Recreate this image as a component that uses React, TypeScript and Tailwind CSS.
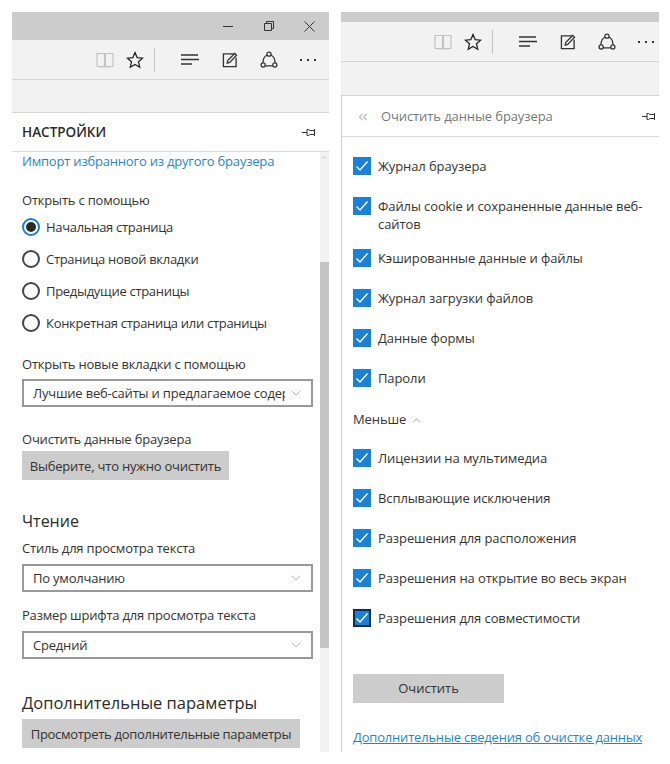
import { ChevronDown, ChevronUp, ChevronsLeft } from "lucide-react"

const font = "font-['Open_Sans',sans-serif]"

function Toolbar({ right = "mr-[13px]" }: { right?: string }) {
  return (
    <div className="flex h-full items-center justify-end text-[#2b2b2b]">
      {/* reading view */}
      <svg width="18" height="16" viewBox="0 0 18 16" fill="none" stroke="#c4c4c4" strokeWidth="1.2">
        <path d="M1 1.500h7.500v13H1zM9.500 1.500H17v13H9.500z" />
        <path d="M3 14.800h12" />
      </svg>
      {/* favourite */}
      <svg className="ml-[12px]" width="18" height="18" viewBox="0 0 18 18" fill="none" stroke="#222" strokeWidth="1.3">
        <path d="M9 1.600l2.200 5.100 5.400.5-4.100 3.600 1.200 5.400L9 13.400l-4.700 2.800 1.200-5.400-4.100-3.600 5.400-.5z" />
      </svg>
      <div className="ml-[10px] h-[24px] w-px bg-[#c4c4c4]" />
      {/* hub */}
      <svg className="ml-[26px]" width="18" height="12" viewBox="0 0 18 12" fill="none" stroke="#333" strokeWidth="1.3">
        <path d="M0 1h17M0 5.500h18M0 10h11" />
      </svg>
      {/* note */}
      <svg className="ml-[23px]" width="16" height="16" viewBox="0 0 17 17" fill="none" stroke="#333" strokeWidth="1.4">
        <path d="M13 2H1.500v13.500H15V6" />
        <path d="M5.500 11.800l.7-3L13.500 1.500l2 2-7.300 7.500z" />
      </svg>
      {/* share */}
      <svg className="ml-[22px]" width="18" height="18" viewBox="0 0 20 20" fill="none" stroke="#333" strokeWidth="1.4">
        <circle cx="10" cy="3.500" r="2.300" />
        <circle cx="3.500" cy="15.500" r="2.300" />
        <circle cx="16.500" cy="15.500" r="2.300" />
        <path d="M7.800 4.500C5 6 3.300 9 3.300 13.200M12.200 4.500C15 6 16.700 9 16.700 13.200M5.800 16.500h8.400" />
      </svg>
      <div className={`ml-[22px] flex gap-[5px] ${right}`}>
        <span className="size-[2px] bg-[#333]" />
        <span className="size-[2px] bg-[#333]" />
        <span className="size-[2px] bg-[#333]" />
      </div>
    </div>
  )
}

function Pin() {
  return (
    <svg width="15" height="9" viewBox="0 0 15 9" fill="none" stroke="#333" strokeWidth="1">
      <path d="M0 4.500h5M5 1.500h1.500L8 2.500h4.500V1v7-1.500H8L6.500 7.500H5z" />
    </svg>
  )
}

function Radio({ label, checked = false }: { label: string; checked?: boolean }) {
  return (
    <div className="flex h-[32px] items-center gap-[6px]">
      {checked ? (
        <span className="flex size-[18px] items-center justify-center rounded-full border-[2px] border-[#1a7fd0]">
          <span className="size-[10px] rounded-full bg-[#2b2b2b]" />
        </span>
      ) : (
        <span className="size-[18px] rounded-full border-[2px] border-[#444]" />
      )}
      <span className="text-[13px] tracking-[-0.3px] text-[#333]">{label}</span>
    </div>
  )
}

function Select({ value, clip = false }: { value: string; clip?: boolean }) {
  return (
    <div className="flex h-[28px] w-[291px] items-center border-[2px] border-[#999] bg-white pl-[9px] pr-[7px]">
      <span className={`text-[13px] tracking-[-0.2px] text-[#333] ${clip ? "w-[252px] overflow-hidden whitespace-nowrap" : ""}`}>{value}</span>
      <ChevronDown className="ml-auto text-[#aaa]" size={16} strokeWidth={1.2} />
    </div>
  )
}

function Check({ label, focus = false, wrap = false }: { label: string; focus?: boolean; wrap?: boolean }) {
  return (
    <div className={`flex items-start gap-[7px] ${wrap ? "mb-[-6px]" : ""}`}>
      <span className={`flex size-[18px] shrink-0 items-center justify-center bg-[#1a80d8] ${focus ? "border-[2px] border-[#10304f]" : ""}`}>
        <svg width="14" height="12" viewBox="0 0 14 12" fill="none" stroke="#fff" strokeWidth="1.400">
          <path d="M1.500 6.500l3.500 3.500 7.500-8.500" />
        </svg>
      </span>
      <span className="text-[13px] leading-[18px] tracking-[-0.1px] text-[#333]">{label}</span>
    </div>
  )
}

export default function App() {
  return (
    <div className={`${font} flex h-[764px] w-[670px] items-start bg-white pt-[12px] pl-[12px]`}>
      {/* left window */}
      <div className="flex h-[740px] w-[317px] flex-col">
        <div className="flex h-[28px] shrink-0 items-center justify-end bg-[#cccccc] pr-[14px] text-[#333]">
          <span className="h-px w-[10px] bg-[#333]" />
          <svg className="ml-[31px]" width="10" height="10" viewBox="0 0 10 10" fill="none" stroke="#333">
            <path d="M2.500 2.500V.5h7v7h-2M.5 2.500h7v7h-7z" />
          </svg>
          <svg className="ml-[30px]" width="11" height="11" viewBox="0 0 11 11" fill="none" stroke="#333">
            <path d="M.5.5l10 10M10.500.5l-10 10" />
          </svg>
        </div>
        <div className="h-[40px] shrink-0 border-b border-[#d4d4d4] bg-[#f2f2f2]">
          <Toolbar />
        </div>
        <div className="h-[33px] shrink-0 border-b border-[#d4d4d4] bg-[#f2f2f2]" />
        <div className="flex h-[39px] shrink-0 items-center justify-between border-b border-[#dcdcdc] pl-[10px] pr-[12px] pt-[1px]">
          <span className="text-[13.5px] font-semibold text-[#2b2b2b]">НАСТРОЙКИ</span>
          <Pin />
        </div>
        <div className="flex min-h-0 flex-1">
          <div className="min-w-0 flex-1 pl-[10px] text-[13px] leading-[18px] tracking-[-0.2px] text-[#333]">
            <a className="block text-[#1f86c9]">Импорт избранного из другого браузера</a>
            <p className="mt-[21px]">Открыть с помощью</p>
            <div className="mt-[2px]">
              <Radio label="Начальная страница" checked />
              <Radio label="Страница новой вкладки" />
              <Radio label="Предыдущие страницы" />
              <Radio label="Конкретная страница или страницы" />
            </div>
            <p className="mt-[16px]">Открыть новые вкладки с помощью</p>
            <div className="mt-[6px]">
              <Select value="Лучшие веб-сайты и предлагаемое содержимое" clip />
            </div>
            <p className="mt-[23px]">Очистить данные браузера</p>
            <button className="mt-[3px] block h-[29px] w-[207px] bg-[#cccccc]">Выберите, что нужно очистить</button>
            <h2 className="mt-[30px] text-[16px] leading-[22px] tracking-normal text-[#2b2b2b]">Чтение</h2>
            <p className="mt-[7px]">Стиль для просмотра текста</p>
            <div className="mt-[7px]">
              <Select value="По умолчанию" />
            </div>
            <p className="mt-[14px]">Размер шрифта для просмотра текста</p>
            <div className="mt-[7px]">
              <Select value="Средний" />
            </div>
            <h2 className="mt-[31px] text-[16.5px] leading-[26px] tracking-normal text-[#2b2b2b]">Дополнительные параметры</h2>
            <button className="mt-[3px] block h-[29px] w-[278px] bg-[#cccccc] tracking-[-0.3px]">Просмотреть дополнительные параметры</button>
          </div>
          {/* scrollbar */}
          <div className="flex w-[9px] shrink-0 flex-col bg-[#f2f2f2]">
            <ChevronUp className="mt-[1px]" size={9} strokeWidth={1.500} color="#aaa" />
            <div className="mt-[100px] h-[386px] bg-[#c4c4c4]" />
          </div>
        </div>
      </div>

      {/* right window */}
      <div className="ml-[12px] flex h-[740px] w-[318px] flex-col">
        <div className="h-[10px] shrink-0 bg-[#cccccc]" />
        <div className="h-[40px] shrink-0 border-b border-[#d4d4d4] bg-[#f2f2f2]">
          <Toolbar right="mr-[5px]" />
        </div>
        <div className="h-[34px] shrink-0 border-b border-[#d4d4d4] bg-[#f2f2f2]" />
        <div className="flex min-h-0 flex-1 flex-col border-l border-[#cfcfcf]">
          <div className="flex h-[41px] shrink-0 items-center border-b border-[#dcdcdc] pl-[14px] pr-[2px] pt-[1px]">
            <ChevronsLeft size={14} strokeWidth={1.300} color="#666" />
            <span className="ml-[11px] text-[13px] tracking-[-0.1px] text-[#777]">Очистить данные браузера</span>
            <span className="ml-auto"><Pin /></span>
          </div>
          <div className="pl-[11px] pr-[10px] pt-[20px]">
            <div className="flex flex-col gap-[22px]">
              <Check label="Журнал браузера" />
              <Check label="Файлы cookie и сохраненные данные веб-сайтов" wrap />
              <Check label="Кэшированные данные и файлы" />
              <Check label="Журнал загрузки файлов" />
              <Check label="Данные формы" />
              <Check label="Пароли" />
              <div className="flex h-[18px] items-center gap-[4px] pt-[4px] text-[13px] tracking-[-0.1px] text-[#333]">
                Меньше <ChevronUp size={13} strokeWidth={1.200} color="#777" />
              </div>
              <Check label="Лицензии на мультимедиа" />
              <Check label="Всплывающие исключения" />
              <Check label="Разрешения для расположения" />
              <Check label="Разрешения на открытие во весь экран" />
              <Check label="Разрешения для совместимости" focus />
            </div>
            <button className="mt-[47px] block h-[29px] w-[151px] bg-[#cccccc] text-[13px] text-[#333]">Очистить</button>
            <a className="mt-[25px] block whitespace-nowrap text-[13px] leading-[18px] tracking-[-0.2px] text-[#1f86c9] underline">Дополнительные сведения об очистке данных</a>
          </div>
        </div>
      </div>
    </div>
  )
}
